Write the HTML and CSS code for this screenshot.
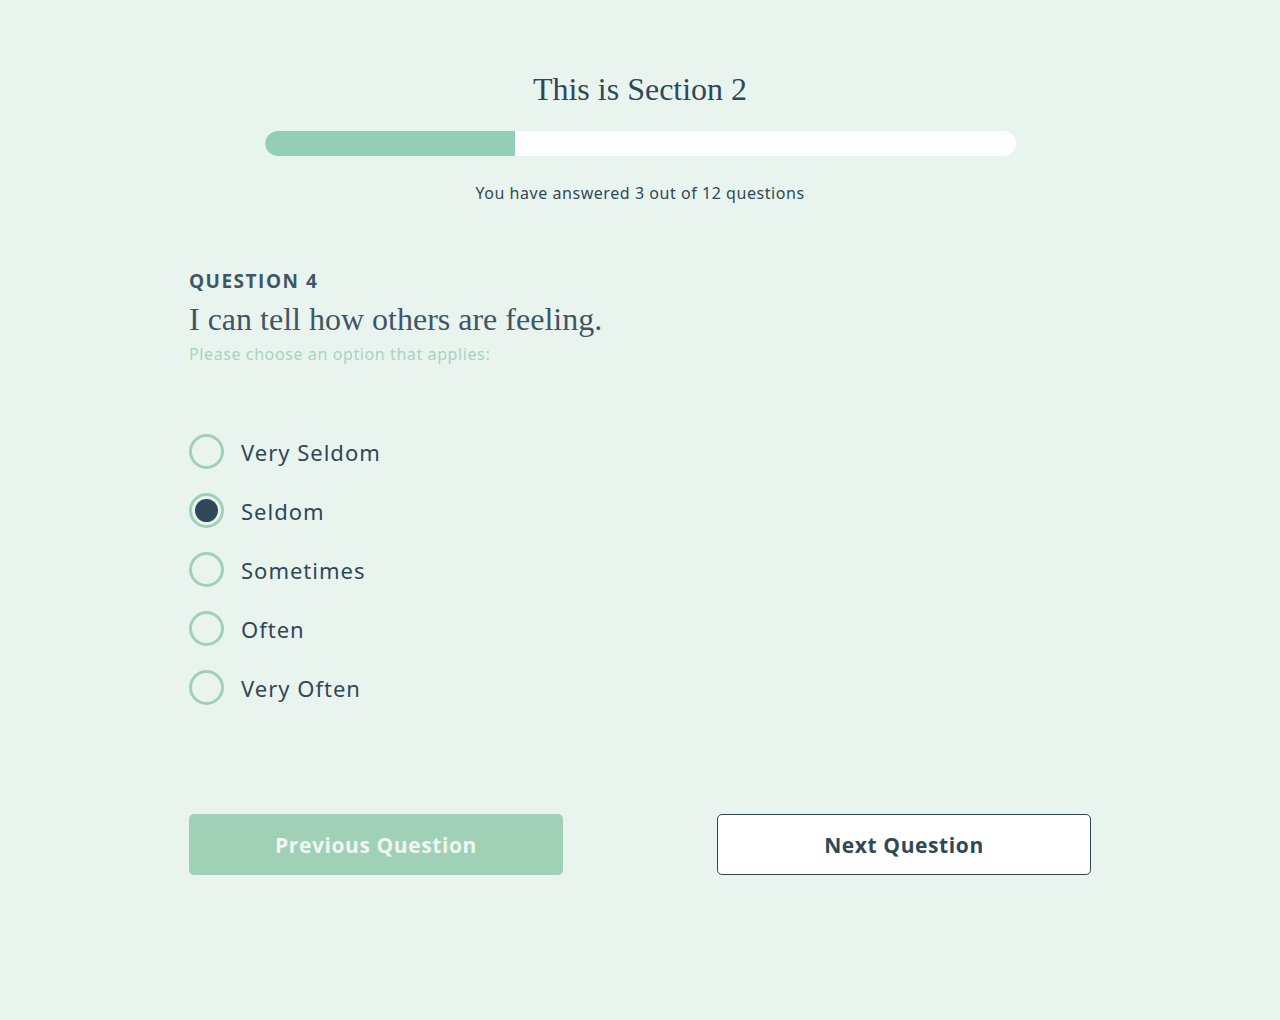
FILE: index.html
```html
<!DOCTYPE html>
<html lang="en">
<head>
    <meta charset="UTF-8">
    <title>Section 2</title>
    <link rel="stylesheet" href="styles.css">
</head>
<body>
    <div class="quiz">
        <header class="quiz-head">
            <h1 class="section-title">This is Section 2</h1>
            <div class="progress"><div class="progress-fill" style="width: 33.3%"></div></div>
            <p class="progress-text">You have answered 3 out of 12 questions</p>
        </header>

        <section class="question">
            <div class="question-num">QUESTION 4</div>
            <h2 class="question-text">I can tell how others are feeling.</h2>
            <p class="question-hint">Please choose an option that applies:</p>

            <ul class="options">
                <li class="option"><span class="radio"></span><span class="option-label">Very Seldom</span></li>
                <li class="option checked"><span class="radio"></span><span class="option-label">Seldom</span></li>
                <li class="option"><span class="radio"></span><span class="option-label">Sometimes</span></li>
                <li class="option"><span class="radio"></span><span class="option-label">Often</span></li>
                <li class="option"><span class="radio"></span><span class="option-label">Very Often</span></li>
            </ul>
        </section>

        <nav class="quiz-nav">
            <button class="btn btn-prev">Previous Question</button>
            <button class="btn btn-next">Next Question</button>
        </nav>
    </div>
</body>
</html>
```

FILE: styles.css
```css
body {
    margin: 0;
    background: #eaf4ef;
    color: #2f4858;
    font-family: "Noto Sans", sans-serif;
}
.quiz {
    width: 902px;
    margin: 0 auto;
    padding-top: 70px;
}
.quiz-head {
    display: flex;
    flex-direction: column;
    align-items: center;
}
.section-title {
    margin: 0;
    font-family: "Liberation Serif", serif;
    font-weight: normal;
    font-size: 32px;
    line-height: 38px;
    color: #2f4858;
}
.progress {
    width: 751px;
    height: 25px;
    margin-top: 23px;
    background: #fff;
    border-radius: 13px;
    overflow: hidden;
}
.progress-fill {
    height: 100%;
    background: #93cfb4;
    border-radius: 13px 0 0 13px;
}
.progress-text {
    margin: 27px 0 0;
    font-size: 16px;
    line-height: 20px;
    letter-spacing: 0.55px;
    color: #2f4858;
}
.question {
    margin-top: 66px;
}
.question-num {
    font-family: "Open Sans", sans-serif;
    font-weight: bold;
    font-size: 19px;
    line-height: 24px;
    letter-spacing: 1.5px;
    color: #3f5666;
}
.question-text {
    margin: 8px 0 0;
    font-family: "Liberation Serif", serif;
    font-weight: normal;
    font-size: 32px;
    line-height: 36px;
    color: #3f5666;
}
.question-hint {
    margin: 7px 0 0;
    font-size: 16px;
    line-height: 20px;
    letter-spacing: 0.6px;
    color: #a4d5bd;
}
.options {
    list-style: none;
    margin: 70px 0 0;
    padding: 0;
    display: flex;
    flex-direction: column;
    gap: 24px;
}
.option {
    display: flex;
    align-items: center;
    gap: 17px;
    height: 35px;
}
.radio {
    width: 29px;
    height: 29px;
    border: 3px solid #a0d1b7;
    border-radius: 50%;
    display: flex;
    align-items: center;
    justify-content: center;
}
.option.checked .radio::after {
    content: "";
    width: 23px;
    height: 23px;
    border-radius: 50%;
    background: #2f4858;
}
.option-label {
    font-size: 22px;
    letter-spacing: 1px;
    color: #2f4858;
}
.quiz-nav {
    display: flex;
    justify-content: space-between;
    margin-top: 109px;
}
.btn {
    width: 374px;
    height: 61px;
    border-radius: 5px;
    font-family: "Open Sans", sans-serif;
    font-weight: bold;
    font-size: 21px;
    letter-spacing: 0.6px;
    cursor: pointer;
}
.btn-prev {
    background: #a0d1b7;
    border: none;
    color: #eef7f2;
}
.btn-next {
    background: #fff;
    border: 1px solid #2f4858;
    color: #2f4858;
}
```
